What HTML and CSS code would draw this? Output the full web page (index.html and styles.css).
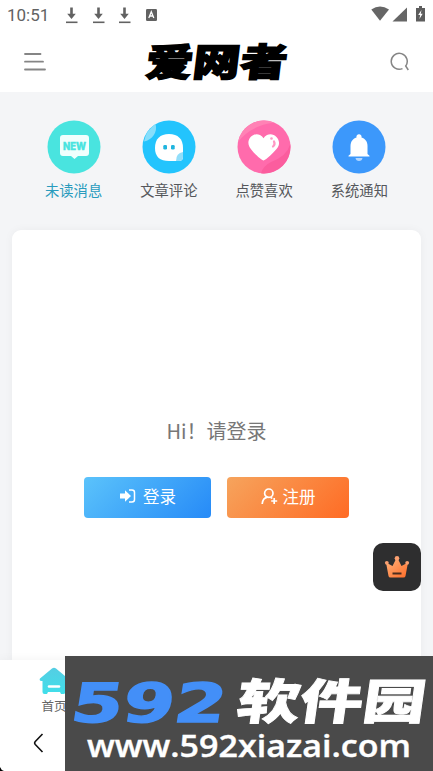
FILE: index.html
```html
<!DOCTYPE html>
<html lang="zh-CN">
<head>
<meta charset="utf-8">
<meta name="viewport" content="width=device-width, initial-scale=1">
<title>爱网者</title>
<link rel="stylesheet" href="styles.css">
</head>
<body>
<div class="screen">
  <div class="status">
    <span class="clock">10:51</span>
    <div class="notices">
      <svg width="13" height="17" viewBox="0 0 13 17"><path d="M1 15.300h11.500" stroke="#626262" stroke-width="1.600"/><path d="M5.200.5h2.600v6.200h3L6.500 12 2.200 6.700h3z" fill="#626262"/></svg>
      <svg width="13" height="17" viewBox="0 0 13 17"><path d="M1 15.300h11.500" stroke="#626262" stroke-width="1.600"/><path d="M5.200.5h2.600v6.200h3L6.500 12 2.200 6.700h3z" fill="#626262"/></svg>
      <svg width="13" height="17" viewBox="0 0 13 17"><path d="M1 15.300h11.500" stroke="#626262" stroke-width="1.600"/><path d="M5.200.5h2.600v6.200h3L6.500 12 2.200 6.700h3z" fill="#626262"/></svg>
      <svg width="13" height="17" viewBox="0 0 13 17"><rect x="1" y="2" width="11" height="12" rx="1.300" fill="#626262"/><path d="M3.800 11 6.300 4.700 8.800 11M4.700 9h3.300" fill="none" stroke="#fff" stroke-width="1.300"/></svg>
    </div>
    <div class="signals">
      <svg width="56" height="18" viewBox="0 0 56 18"><path d="M.3 4.400Q9 -1.200 18 4.400L9 15.800z" fill="#666"/><path d="M21.500 16.500 36 2.500v14z" fill="#666"/><path d="M45 3h3V1h3v2h3v13.500h-9z" fill="#5d5d5d"/><path d="m50.500 5-3.300 5h2l-.8 4 3.300-5.200h-2z" fill="#fff"/></svg>
    </div>
  </div>
  <header class="header">
    <svg class="menu" width="23" height="20" viewBox="0 0 23 20"><path d="M2 2H17.500M2 9.700h18M2 17.500H22" stroke="#858585" stroke-width="1.800" stroke-linecap="round"/></svg>
    <svg class="logo" width="148" height="44" viewBox="0 0 148 44"><text transform="translate(1.500 35.500) skewX(-7) scale(1.240 1)" class="logo-text">爱网者</text></svg>
    <svg class="search" width="20" height="20" viewBox="0 0 20 20"><path d="M12.500 16.600A8 8 0 1 1 15.700 14L18.300 18" fill="none" stroke="#858585" stroke-width="1.500"/></svg>
  </header>
  <nav class="tabs">
    <a class="tab active">
      <svg width="54" height="54" viewBox="0 0 54 54"><circle cx="27" cy="27" r="26.500" fill="#49e4df"/><path d="M16 15h23a3 3 0 0 1 3 3v15a3 3 0 0 1-3 3h-8l-3.500 3-3.500-3h-8a3 3 0 0 1-3-3V18a3 3 0 0 1 3-3z" fill="#f0fffd"/><text x="16" y="30" textLength="23" lengthAdjust="spacingAndGlyphs" class="new-text">NEW</text></svg>
      <span>未读消息</span>
    </a>
    <a class="tab">
      <svg width="54" height="54" viewBox="0 0 54 54"><circle cx="27" cy="27" r="26.500" fill="#23c4fd"/><path d="M2 21.500A26.500 26.500 0 0 1 13.500 4C16 12 10 20 2 21.500z" fill="#86defb"/><path d="M27 14c9 0 14 5 14 14v9q0 4-4 4H27c-9 0-14-4-14-13s5-14 14-14z" fill="#fff"/><path d="M41 32v5q0 4-4 4h-3q0-8 7-9z" fill="#91defa"/><rect x="21.300" y="25" width="3.700" height="4.500" rx="1.300" fill="#20b5df"/><rect x="29" y="25" width="3.700" height="4.500" rx="1.300" fill="#20b5df"/></svg>
      <span>文章评论</span>
    </a>
    <a class="tab">
      <svg width="54" height="54" viewBox="0 0 54 54"><circle cx="27" cy="27" r="26.500" fill="#ff6bac"/><path d="M53.300 24A26.500 26.500 0 0 1 24 53.300Q26 46 34 42 50 36 53.300 24z" fill="#fb5d9e"/><path d="M1 22A26.500 26.500 0 0 1 37 2.500Q13 6 1 22z" fill="#ff82b5"/><path d="M26.500 40.500c-2 0-12-9.500-14-13.500-4-7 3.500-15.500 10.500-12q2.500 1.300 3.500 3.200 1-1.900 3.500-3.200c7-3.500 15 5 11 12-2.500 4-12.500 13.500-14.500 13.500z" fill="#fff"/><path d="M37 21.500q1.500 3-1 5" fill="none" stroke="#ff99c4" stroke-width="2.200" stroke-linecap="round"/><circle cx="34.500" cy="18.500" r="1.300" fill="#ff99c4"/></svg>
      <span>点赞喜欢</span>
    </a>
    <a class="tab">
      <svg width="54" height="54" viewBox="0 0 54 54"><circle cx="27" cy="27" r="26.500" fill="#3c98fb"/><path d="M24.500 17.500a2.600 2.600 0 1 1 5 0c4 1.200 6 4.500 6 8.500v8l2 1.700v.8H16.500v-.8l2-1.700v-8c0-4 2-7.300 6-8.500z" fill="#fff"/><path d="M23.500 38h7q-.5 3-3.500 3t-3.500-3z" fill="#b2d6ff"/></svg>
      <span>系统通知</span>
    </a>
  </nav>
  <main class="card">
    <p class="greeting">Hi！请登录</p>
    <div class="actions">
      <button class="btn login"><svg width="17" height="16" viewBox="0 0 17 16"><path d="M1 5.500h5V2.200L12 8l-6 5.800v-3.300H1z" fill="#fff"/><path d="M10 2h3q2.500 0 2.500 2.500v7q0 2.500-2.500 2.500h-3" fill="none" stroke="#fff" stroke-width="1.500"/></svg><span>登录</span></button>
      <button class="btn register"><svg width="17" height="17" viewBox="0 0 17 17"><g fill="none" stroke="#fff" stroke-width="1.700"><circle cx="7.800" cy="5.200" r="4.200"/><path d="M1.200 16C1.500 12 3.500 9.700 6.700 9.200M9.500 9.200Q10.500 9.700 11.200 10.500M13.200 10v6M10.200 13h6"/></g></svg><span>注册</span></button>
    </div>
  </main>
  <div class="vip"><svg width="26" height="24" viewBox="0 0 26 24"><defs><linearGradient id="crown" x2="1" y2="1"><stop stop-color="#ffb37c"/><stop offset="1" stop-color="#ff6c27"/></linearGradient></defs><g fill="url(#crown)"><path d="M2 7.500 8.500 11 12 4h2l3.500 7L24 7.500 21.500 21q-.3 1.500-2 1.500h-13q-1.700 0-2-1.500z"/></g><g fill="#fba071"><circle cx="13" cy="3.200" r="2.300"/><circle cx="2.800" cy="7.800" r="1.900"/><circle cx="23.200" cy="7.800" r="1.900"/></g><path d="M8.500 18.500h9" stroke="#4d2c1d" stroke-width="2"/></svg></div>
  <footer class="footer">
    <div class="home"><svg width="30" height="28" viewBox="0 0 30 28"><defs><linearGradient id="roof" x2="0" y2="1"><stop stop-color="#55cde3"/><stop offset="1" stop-color="#40dfea"/></linearGradient></defs><path d="M13 1.500q2-1.700 4 0L29 11.500q1 2-1 2.500h-1.500v11q0 2-2 2h-2.500l-1-2h-12l-1 2H5.500q-2 0-2-2V14H2q-2-.5-1-2.500z" fill="url(#roof)"/><path d="M10 19.500h10" stroke="#fff" stroke-width="2.600" stroke-linecap="round"/></svg><span>首页</span></div>
    <svg class="back" width="12" height="20" viewBox="0 0 12 20"><path d="M9.500 1 2.300 8.500q-1.300 1.500 0 3L9.500 19" fill="none" stroke="#111" stroke-width="1.600"/></svg>
    <svg class="corner" width="4" height="4" viewBox="0 0 4 4"><path d="M0 0Q1 3 4 4H0z"/></svg>
  </footer>
  <div class="watermark">
    <svg width="368" height="115" viewBox="0 0 368 115">
      <text transform="translate(4 66) skewX(-9) scale(1.370 1)" class="mark-num">592</text>
      <text transform="translate(170 63) skewX(-8) scale(1.310 1)" class="mark-name">软件园</text>
      <text x="22" y="101" textLength="324" lengthAdjust="spacingAndGlyphs" class="mark-url">www.592xiazai.com</text>
    </svg>
  </div>
</div>
</body>
</html>
```

FILE: styles.css
```css
* { box-sizing: border-box; }
body { margin: 0; font-family: "Noto Sans CJK SC", sans-serif; overflow: hidden; }
svg { display: block; flex: none; }
.screen { position: relative; height: 771px; display: flex; flex-direction: column; background: #f4f5f7; overflow: hidden; }
.status { height: 30px; flex: none; display: flex; align-items: center; padding: 0 6px 0 7px; background: #fff; }
.clock { font: 17px/30px Roboto, sans-serif; color: #626262; width: 58px; }
.notices { display: flex; gap: 13.500px; }
.signals { margin-left: auto; margin-top: -2px; }
.header { height: 62px; flex: none; display: flex; align-items: center; justify-content: space-between; padding: 1px 23px 0 23px; background: #fff; }
.logo { overflow: visible; margin-left: -3px; }
.logo-text { font: 900 38px "Noto Sans CJK SC", sans-serif; stroke: #000; stroke-width: 1.500px; }
.tabs { height: 138px; flex: none; display: flex; padding: 28px 26px 0 26px; }
.tab { flex: 1; display: flex; flex-direction: column; align-items: center; font-size: 14.300px; line-height: 20px; color: #55575b; }
.tab span { margin-top: 6px; }
.tab.active { color: #299bbd; }
.new-text { font: 800 10px Inter, sans-serif; fill: #49e4df; stroke: #49e4df; stroke-width: .4px; }
.card { flex: 1; margin: 0 12px; padding-top: 184px; background: #fff; border-radius: 9px 9px 0 0; box-shadow: 0 0 10px rgba(0,0,0,.045); }
.greeting { margin: 0; text-align: center; font-size: 20px; line-height: 34px; color: #777; }
.actions { display: flex; gap: 16px; margin: 29px 0 0 72px; }
.btn { display: flex; align-items: center; justify-content: center; height: 41px; padding: 0 0 3px; border: 0; border-radius: 4px; color: #fff; font: 16.500px/24px "Noto Sans CJK SC", sans-serif; }
.login { width: 127px; gap: 7px; background: linear-gradient(135deg, #5bc3fb, #268af7); }
.register { width: 122px; gap: 5px; background: linear-gradient(135deg, #f6a45d, #ff6b24); }
.vip { position: absolute; left: 373px; top: 543px; width: 48px; height: 48px; display: flex; align-items: center; justify-content: center; border-radius: 10px; background: #2e2e2f; }
.footer { position: relative; height: 111px; flex: none; padding: 7px 0 0 39px; background: #fff; box-shadow: 0 0 10px rgba(0,0,0,.05); }
.home { width: 30px; display: flex; flex-direction: column; align-items: center; font-size: 12.500px; line-height: 18px; color: #666; }
.home span { margin-top: 2px; white-space: nowrap; }
.back { margin: 18px 0 0 -6px; }
.corner { position: absolute; left: 0; bottom: 0; }
.watermark { position: absolute; left: 65px; top: 656px; width: 368px; height: 115px; background: #4a4a4a; }
.mark-num { font: bold 54px "DejaVu Sans", sans-serif; fill: #438ff8; stroke: #438ff8; stroke-width: 1.500px; }
.mark-name { font: 900 48px "Noto Sans CJK SC", sans-serif; fill: #fff; stroke: #fff; stroke-width: .8px; }
.mark-url { font: 600 30px "Open Sans", sans-serif; fill: #fff; stroke: #fff; stroke-width: .4px; }
```
